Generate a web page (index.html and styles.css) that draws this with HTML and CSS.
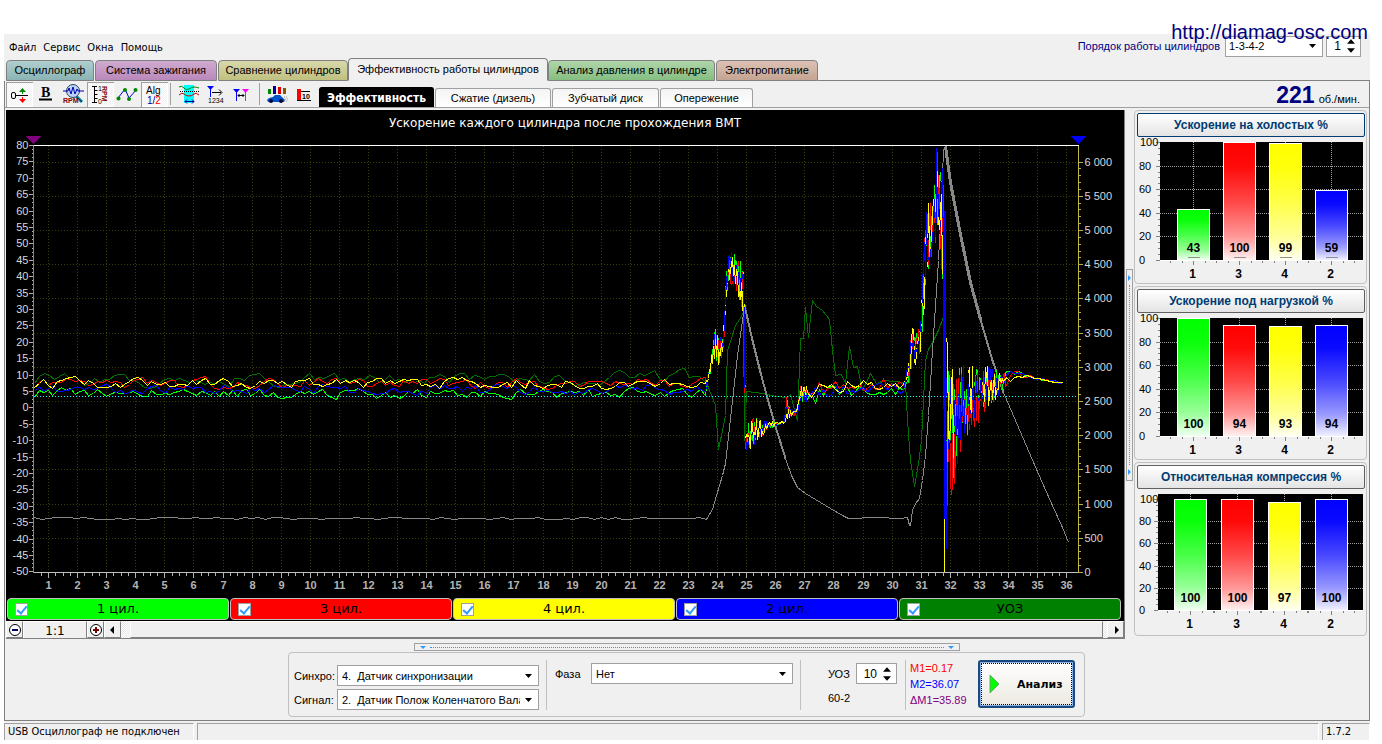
FILE: index.html
```html
<!DOCTYPE html>
<html lang="ru">
<head>
<meta charset="utf-8">
<title>USB Осциллограф</title>
<link rel="stylesheet" href="styles.css">
</head>
<body>
<a class="site-link" href="#">http://diamag-osc.com</a>
<div class="window">
  <header class="menu-row">
    <nav class="menu">
      <button class="menu-item">Файл</button><button class="menu-item">Сервис</button><button class="menu-item">Окна</button><button class="menu-item">Помощь</button>
    </nav>
    <div class="order">
      <label class="order-label" for="order">Порядок работы цилиндров</label>
      <span class="combo combo-order"><select id="order"><option>1-3-4-2</option></select><svg class="arrow" viewBox="0 0 7 4"><path d="M0 0h7L3.500 4z"/></svg></span>
      <span class="spin spin-small"><input type="text" value="1" aria-label="Номер цилиндра"><span class="spin-buttons"><button aria-label="Больше"><svg viewBox="0 0 7 4"><path d="M0 4h7L3.500 0z"/></svg></button><button aria-label="Меньше"><svg viewBox="0 0 7 4"><path d="M0 0h7L3.500 4z"/></svg></button></span></span>
    </div>
  </header>
  <nav class="tabs">
    <button class="tab tab-teal">Осциллограф</button>
    <button class="tab tab-violet">Система зажигания</button>
    <button class="tab tab-olive">Сравнение цилиндров</button>
    <button class="tab tab-active">Эффективность работы цилиндров</button>
    <button class="tab tab-green">Анализ давления в цилиндре</button>
    <button class="tab tab-brown">Электропитание</button>
    <span class="tabs-rest"></span>
  </nav>
  <div class="frame">
    <div class="toolbar">
      <div class="tools">
        <button class="tool pressed" aria-label="Смещение нуля"><svg viewBox="0 0 26 25"><path d="M10 13.500h12" stroke="#000"/><path d="M16.500 9v3" stroke="#080" fill="none"/><path d="M13 10l3.500-4 3.500 4z" fill="#080"/><path d="M16.500 15v3" stroke="#f00"/><path d="M13 17h7l-3.500 4z" fill="#f00"/><rect x="5.500" y="10.500" width="4" height="6" rx="1.500" fill="none" stroke="#000"/></svg></button>
        <button class="tool" aria-label="Жирные линии"><svg viewBox="0 0 26 25"><text class="icon-b" x="8" y="15">B</text><path d="M6 17.500h13" stroke="#000" stroke-width="2"/></svg></button>
        <button class="tool" aria-label="Обороты"><svg viewBox="0 0 26 25"><path d="M16 14l6 6" stroke="#08a" stroke-width="3"/><path d="M16 14l6 6" stroke="#222" stroke-width="1"/><circle cx="13" cy="9" r="6.500" fill="#b8d4ff" stroke="#345" /><path d="M3 9h5l1-3 2 6 2-7 2 7 2-5 1 2h6" fill="none" stroke="#00a"/><text class="icon-rpm" x="3" y="21">RPM</text></svg></button>
        <button class="tool pressed" aria-label="Шкала оборотов"><svg viewBox="0 0 26 25"><path d="M5 4.500h5M5 20.500h5M7.500 4v17M7.500 8.500h3M7.500 12.500h3M7.500 16.500h3" stroke="#000"/><text class="icon-tiny" x="11" y="9">1</text><text class="icon-tiny" x="11" y="22">0</text><g transform="translate(15 4) rotate(90)"><text class="icon-rpm" x="0" y="0">RPM</text></g></svg></button>
        <button class="tool" aria-label="Точки"><svg viewBox="0 0 26 25"><path d="M4 16l7-9 4 9 8-9" fill="none" stroke="#00d"/><g fill="#080"><circle cx="4.500" cy="16.500" r="2"/><circle cx="11" cy="8" r="2"/><circle cx="15" cy="17" r="2"/><circle cx="21.500" cy="8" r="2"/></g></svg></button>
        <button class="tool pressed" aria-label="Алгоритм"><svg viewBox="0 0 26 25"><text class="icon-alg" x="5" y="12">Alg</text><text class="icon-alg" x="6" y="22" fill="#009">1/<tspan fill="#f00">2</tspan></text></svg></button>
        <span class="tool-sep"></span>
        <button class="tool" aria-label="Синхронизация"><svg viewBox="0 0 26 25"><path d="M8 3h10v18H8z" fill="#0ff"/><path d="M3 5q3-2 5 1t5 1 5-2 5 1" fill="none" stroke="#080"/><path d="M3 13q3-3 5-1t5 2 5-2 5 1" fill="none" stroke="#c00"/><path d="M4 9.500h20" stroke="#000" stroke-dasharray="1 1"/><path d="M9 19.500h9M11 17.500l-2 2 2 2M16 17.500l2 2-2 2" fill="none" stroke="#009"/></svg></button>
        <button class="tool" aria-label="Нумерация"><svg viewBox="0 0 26 25"><path d="M4 4h7l-3.500 4z" fill="#00f"/><path d="M7.500 7v8" stroke="#00f"/><path d="M9 10.500h9M16 7.500l3 3-3 3" fill="none" stroke="#000"/><text class="icon-num" x="5" y="21">1234</text></svg></button>
        <button class="tool" aria-label="Маркеры"><svg viewBox="0 0 26 25"><path d="M3 7h7l-3.500 4z" fill="#00f"/><path d="M12 7h7l-3.500 4z" fill="#f0f"/><path d="M6.500 9v10" stroke="#00f"/><path d="M15.500 9v10" stroke="#f0f"/><path d="M8 13.500h6M9.500 12l-1.500 1.500 1.500 1.500M12.500 12l1.500 1.500-1.500 1.500" fill="none" stroke="#000"/></svg></button>
        <span class="tool-sep"></span>
        <button class="tool" aria-label="Тест автомобиля"><svg viewBox="0 0 26 25"><path d="M3 7h3v5H3z" fill="#080"/><path d="M8 4h3v8H8z" fill="#009"/><path d="M13 5h3v7h-3z" fill="#d00"/><path d="M18 6h3v6h-3z" fill="#850"/><path d="M2 18l2-2 4-1 2-2h5l3 3 2 2-1 2H3z" fill="#05c"/><circle cx="6" cy="19" r="2" fill="#003"/><circle cx="16" cy="19" r="2" fill="#003"/><path d="M19 15h3M20 17h3M19 19h3" stroke="#999" stroke-dasharray="1 1"/></svg></button>
        <button class="tool" aria-label="Порог"><svg viewBox="0 0 26 25"><path d="M5 7h4v11H5z" fill="#f00"/><path d="M9 9.500h9M5 18.500h14" stroke="#000"/><text class="icon-ten" x="10" y="17">10</text></svg></button>
      </div>
      <nav class="subtabs">
        <button class="subtab subtab-active">Эффективность</button>
        <button class="subtab subtab-wide">Сжатие (дизель)</button>
        <button class="subtab">Зубчатый диск</button>
        <button class="subtab subtab-narrow">Опережение</button>
      </nav>
      <div class="rpm"><b>221</b><span>об./мин.</span></div>
    </div>
    <main class="main">
      <section class="scope">
        <svg id="chart" class="chart" role="img" aria-label="Ускорение каждого цилиндра"></svg>
        <div class="legend">
          <label class="legend-item c-green"><input type="checkbox" checked><span>1 цил.</span></label>
          <label class="legend-item c-red"><input type="checkbox" checked><span>3 цил.</span></label>
          <label class="legend-item c-yellow"><input type="checkbox" checked><span>4 цил.</span></label>
          <label class="legend-item c-blue"><input type="checkbox" checked><span>2 цил.</span></label>
          <label class="legend-item c-dark"><input type="checkbox" checked><span>УОЗ</span></label>
        </div>
        <div class="scrollbar">
          <button class="scroll-btn" aria-label="Уменьшить"><svg viewBox="0 0 14 14"><circle cx="7" cy="7" r="5.500" fill="#fff" stroke="#000"/><path d="M4 7h6" stroke="#006" stroke-width="2"/></svg></button>
          <span class="zoom">1:1</span>
          <button class="scroll-btn" aria-label="Увеличить"><svg viewBox="0 0 14 14"><circle cx="7" cy="7" r="5.500" fill="#fff" stroke="#000"/><path d="M4 7h6M7 4v6" stroke="#700" stroke-width="2"/></svg></button>
          <button class="scroll-btn" aria-label="Влево"><svg viewBox="0 0 14 14"><path d="M8 3v8L4 7z"/></svg></button>
          <span class="track"><span class="thumb"></span></span>
          <button class="scroll-btn" aria-label="Вправо"><svg viewBox="0 0 14 14"><path d="M6 3v8l4-4z"/></svg></button>
        </div>
      </section>
      <div class="vsplit"><i></i><b></b><i></i></div>
      <aside class="side">
        <section class="card"><button class="card-title focused">Ускорение на холостых %</button><svg class="bars" id="bars-idle"></svg></section>
        <section class="card"><button class="card-title">Ускорение под нагрузкой %</button><svg class="bars" id="bars-load"></svg></section>
        <section class="card"><button class="card-title">Относительная компрессия %</button><svg class="bars" id="bars-comp"></svg></section>
      </aside>
    </main>
    <div class="hsplit"><i></i><b></b><i></i></div>
    <form class="controls" onsubmit="return false">
      <div class="sources">
        <label for="sync">Синхро:</label>
        <span class="combo"><select id="sync"><option>4.&nbsp; Датчик синхронизации</option></select><svg class="arrow" viewBox="0 0 7 4"><path d="M0 0h7L3.500 4z"/></svg></span>
        <label for="signal">Сигнал:</label>
        <span class="combo"><select id="signal"><option>2.&nbsp; Датчик Полож Коленчатого Вала</option></select><svg class="arrow" viewBox="0 0 7 4"><path d="M0 0h7L3.500 4z"/></svg></span>
      </div>
      <div class="phase">
        <label for="phase">Фаза</label>
        <span class="combo"><select id="phase"><option>Нет</option></select><svg class="arrow" viewBox="0 0 7 4"><path d="M0 0h7L3.500 4z"/></svg></span>
      </div>
      <div class="advance">
        <label for="uoz">УОЗ</label>
        <span class="spin"><input id="uoz" type="text" value="10"><span class="spin-buttons"><button aria-label="Больше"><svg viewBox="0 0 7 4"><path d="M0 4h7L3.500 0z"/></svg></button><button aria-label="Меньше"><svg viewBox="0 0 7 4"><path d="M0 0h7L3.500 4z"/></svg></button></span></span>
        <span>60-2</span>
      </div>
      <div class="markers"><span class="m-red">M1=0.17</span><span class="m-blue">M2=36.07</span><span class="m-violet">ΔM1=35.89</span></div>
      <button class="analyze"><svg viewBox="0 0 12 20"><path d="M1 1v18l9-9z" fill="#0f0" stroke="#6a6" /></svg><span>Анализ</span></button>
    </form>
  </div>
  <footer class="status"><span>USB Осциллограф не подключен</span><span></span><span>1.7.2</span></footer>
</div>
<script src="chart.js"></script>
</body>
</html>
```
FILE: styles.css
```css
* { box-sizing: border-box; }
body { margin: 0; background: #fff; color: #000; font: 11px/14px "Liberation Sans", Arial, sans-serif; position: relative; }
button, select, input { font: inherit; color: inherit; margin: 0; padding: 0; border: 0; background: none; border-radius: 0; }
svg { display: block; }

.site-link { position: absolute; right: 14px; top: 20px; z-index: 2; font-size: 20px; line-height: 24px; color: #000080; text-decoration: none; }
.window { margin: 34px 12px 0 4px; background: #f0f0f0; }

.menu-row { display: flex; justify-content: space-between; align-items: center; height: 24px; padding: 0 9px 0 5px; }
.menu { display: flex; gap: 7px; padding-top: 3px; font-family: "DejaVu Sans Condensed", "DejaVu Sans", sans-serif; }
.order { display: flex; align-items: center; gap: 3px; }
.order-label { color: #000080; margin-right: 2px; }

.combo { display: grid; align-items: center; height: 21px; background: #fff; border: 1px solid #a0a0a0; }
.combo select { grid-area: 1 / 1; appearance: none; width: 100%; min-width: 0; padding: 0 18px 0 4px; }
.arrow { grid-area: 1 / 1; justify-self: end; width: 7px; height: 4px; margin-right: 6px; pointer-events: none; }
.combo-order { width: 98px; }
.combo-order select { padding-left: 3px; }
.spin { display: flex; align-items: center; height: 21px; width: 41px; background: #fff; border: 1px solid #a0a0a0; font-size: 12px; }
.spin input { flex: 1; min-width: 0; text-align: right; padding-right: 6px; }
.spin-small { width: 35px; }
.spin-buttons { display: flex; flex-direction: column; gap: 4px; margin-right: 5px; }
.spin-buttons button { width: 8px; height: 5px; }
.spin-buttons svg { width: 8px; height: 5px; }

.tabs { display: flex; align-items: flex-end; height: 23px; padding-left: 1px; }
.tab { height: 21px; padding-bottom: 2px; margin-left: 1px; border: 1px solid #808080; border-radius: 4px 4px 0 0; white-space: nowrap; }
.tab-teal { width: 88px; background: linear-gradient(#b0cfcf, #8bb3b3); }
.tab-violet { width: 122px; background: linear-gradient(#cfabd0, #b988ba); }
.tab-olive { width: 130px; background: linear-gradient(#d8d8ac, #c0c080); }
.tab-active { width: 200px; height: 23px; margin-left: 0; background: #f0f0f0; border-bottom-color: #f0f0f0; }
.tab-green { width: 167px; margin-left: 0; background: linear-gradient(#b0d6ab, #85bd80); }
.tab-brown { width: 102px; background: linear-gradient(#dcc2b4, #c4a492); }
.tabs-rest { flex: 1; border-bottom: 1px solid #808080; }

.frame { border: 1px solid #808080; border-top: 0; }
.toolbar { display: flex; align-items: flex-end; height: 27px; padding-left: 1px; border-bottom: 1px solid #a0a0a0; }
.tools { display: flex; align-items: center; height: 26px; }
.tool { width: 27px; height: 25px; }
.tool svg { width: 26px; height: 25px; }
.pressed { background: repeating-conic-gradient(#fff 0 25%, #f0f0f0 0 50%) 0 0 / 2px 2px; box-shadow: inset 1px 1px #a0a0a0, inset -1px -1px #fff; }
.tool-sep { width: 1px; height: 22px; margin: 0 5px 0 2px; background: #a0a0a0; }
.icon-b { font: bold 14px "Liberation Serif", serif; }
.icon-rpm { font: bold 7px "Liberation Sans", sans-serif; fill: #800000; }
.icon-tiny { font: 7px "Liberation Sans", sans-serif; }
.icon-alg { font: 10px "Liberation Sans", sans-serif; }
.icon-num { font: 7px "Liberation Sans", sans-serif; }
.icon-ten { font: bold 7px "Liberation Sans", sans-serif; }
.subtabs { display: flex; align-items: flex-end; gap: 1px; }
.subtab { width: 107px; height: 19px; border: 1px solid #a0a0a0; border-bottom: 0; border-radius: 3px 3px 0 0; background: linear-gradient(#f4f4f4, #fff); }
.subtab-wide { width: 116px; }
.subtab-narrow { width: 93px; }
.subtab-active { width: 115px; height: 20px; background: #000; color: #fff; font: bold 12px "DejaVu Sans Condensed", "DejaVu Sans", sans-serif; border-color: #000; }
.rpm { display: flex; align-items: baseline; gap: 4px; margin-left: auto; margin-right: 9px; }
.rpm b { font-size: 23px; line-height: 24px; color: #000080; }

.main { display: flex; padding: 2px 2px 0 1px; }
.scope { flex: 1; min-width: 0; background: #000; border-right: 1px solid #808080; border-bottom: 1px solid #808080; }
.chart { width: 100%; height: 488px; }
.chart text { font: 11px "Liberation Sans", sans-serif; fill: #d8d8d8; }
.chart .chart-title { font: 12px "DejaVu Sans", sans-serif; fill: #fff; }
.chart .x-label { font-weight: bold; fill: #b4b4b4; }
.trace { fill: none; shape-rendering: crispEdges; }
.legend { display: flex; gap: 1px; padding: 0 3px 1px 1px; }
.legend-item { flex: 1; display: grid; grid-template-columns: 13px 1fr 13px; align-items: center; height: 22px; padding: 0 7px; border: 1px solid #c0c0c0; border-radius: 4px; text-align: center; font: 13px/18px "DejaVu Sans", sans-serif; }
.legend-item input { appearance: none; display: grid; place-items: center; width: 13px; height: 13px; background: #fff; border: 1px solid #a0a0a0; }
.legend-item input:checked::after { content: ""; width: 4px; height: 8px; border: solid #3399ff; border-width: 0 2px 2px 0; rotate: 40deg; margin-bottom: 2px; }
.c-green { background: #0f0; }
.c-red { background: #f00; }
.c-yellow { background: #ff0; }
.c-blue { background: #00f; }
.c-dark { background: #008000; }
.scrollbar { display: flex; height: 17px; background: #f0f0f0; }
.scroll-btn { display: grid; place-items: center; width: 17px; border: 1px solid #808080; border-color: #fff #808080 #808080 #fff; }
.scroll-btn svg { width: 14px; height: 14px; }
.zoom { width: 64px; font: 12px/18px "DejaVu Sans", sans-serif; text-align: center; border-right: 1px solid #808080; border-left: 1px solid #fff; border-top: 1px solid #fff; }
.track { flex: 1; padding: 0 4px 0 9px; background: repeating-conic-gradient(#fff 0 25%, #e8e8e8 0 50%) 0 0 / 2px 2px; }
.thumb { display: block; height: 100%; background: #f0f0f0; border: 1px solid #808080; border-color: #fff #808080 #808080 #fff; }

.vsplit { align-self: center; display: flex; flex-direction: column; align-items: center; justify-content: space-between; width: 7px; height: 212px; margin: 0 1px; padding: 5px 0; border: 1px solid #a0a0a0; }
.vsplit b { flex: 1; margin: 4px 0; border-left: 1px dotted #3399ff; }
.vsplit i { border: 3px solid transparent; border-left-color: #3399ff; border-right: 0; }
.side { width: 233px; display: flex; flex-direction: column; gap: 2px; }
.card { border: 1px solid #c0c0c0; border-radius: 4px; padding: 2px 1px 0 2px; }
.card-title { display: block; width: 100%; height: 24px; border: 1px solid #606060; border-radius: 2px; background: linear-gradient(#fff, #e4e4e4); color: #003c74; font-weight: bold; font-size: 12px; }
.focused { border-color: #003c74; }
.bars { width: 100%; height: 146px; }
.bars text { font: 11px "Liberation Sans", sans-serif; }
.bars .bar-value, .bars .bar-name { font-weight: bold; font-size: 12px; text-anchor: middle; }

.hsplit { display: flex; align-items: center; width: 546px; height: 8px; margin: 4px 0 1px 409px; padding: 0 5px; border: 1px solid #a0a0a0; }
.hsplit b { flex: 1; margin: 0 4px; border-top: 1px dotted #3399ff; }
.hsplit i { border: 3px solid transparent; border-top-color: #3399ff; border-bottom: 0; }

.controls { display: flex; align-items: flex-start; width: 797px; height: 65px; margin: 0 0 3px 283px; padding: 7px 9px 0 5px; border: 1px solid #c0c0c0; border-radius: 4px; }
.controls > div { height: 50px; }
.sources { display: grid; grid-template-columns: 40px 202px; column-gap: 3px; row-gap: 3px; align-items: center; align-content: end; }
.phase { display: grid; grid-template-columns: 36px 202px; align-items: start; margin-left: 7px; padding: 3px 7px 0 8px; border-left: 1px solid #c0c0c0; }
.phase label, .advance label { padding-top: 4px; }
.advance { display: grid; grid-template-columns: 28px 41px; align-content: start; row-gap: 7px; padding: 3px 8px 0 27px; border-left: 1px solid #c0c0c0; }
.markers { display: flex; flex-direction: column; font-size: 11px; line-height: 16px; padding-left: 4px; border-left: 1px solid #c0c0c0; }
.m-red { color: #f00; }
.m-blue { color: #00f; }
.m-violet { color: #800080; }
.analyze { display: flex; align-items: center; width: 97px; height: 48px; margin-left: auto; padding-left: 9px; gap: 16px; border: 2px solid #1c4a80; border-radius: 3px; background: linear-gradient(#fff, #ece9e0); box-shadow: inset 0 0 0 1px #8cb4e8; outline: 1px dotted #000; outline-offset: -4px; font: bold 11px "DejaVu Sans", sans-serif; }
.analyze svg { width: 12px; height: 20px; }

.status { display: grid; grid-template-columns: 190px 1fr 48px; gap: 3px; padding-top: 2px; font: 11px/16px "DejaVu Sans Condensed", "DejaVu Sans", sans-serif; }
.status span { height: 17px; padding-left: 3px; border: 1px solid #a0a0a0; border-bottom: 0; border-right-color: #fff; }
```
FILE: chart.js
```js
const NS = "http://www.w3.org/2000/svg";
function add(parent, name, attrs, text) {
  const el = document.createElementNS(NS, name);
  for (const k in attrs) el.setAttribute(k, attrs[k]);
  if (text !== undefined) el.textContent = text;
  parent.appendChild(el);
  return el;
}

function random(seed) {
  let a = Math.imul(seed, 2654435761);
  return () => {
    a = (a + 0x6d2b79f5) | 0;
    let t = Math.imul(a ^ (a >>> 15), 1 | a);
    t = (t + Math.imul(t ^ (t >>> 7), 61 | t)) ^ t;
    return ((t ^ (t >>> 14)) >>> 0) / 4294967296;
  };
}

// Linear interpolation over [x, mean, spread] keyframes.
function at(keys, x) {
  let i = 1;
  while (i < keys.length - 1 && keys[i][0] < x) i++;
  const a = keys[i - 1], b = keys[i], t = (x - a[0]) / (b[0] - a[0]);
  return [a[1] + (b[1] - a[1]) * t, a[2] + (b[2] - a[2]) * t];
}

// Traces live on a 1118 x 488 canvas.
const envelope = [
  [699, 276, 4], [704, 258, 6], [709, 234, 20], [713, 244, 16], [716, 236, 12], [718, 212, 14],
  [720, 175, 14], [722, 156, 17], [729, 160, 17], [734, 172, 22], [737, 184, 26], [738, 215, 14],
  [739, 332, 8], [744, 322, 17], [752, 319, 11], [760, 315, 5], [772, 313, 1], [778, 311, 2],
  [780, 298, 12], [784, 302, 4], [791, 301, 4], [794, 283, 7], [806, 282, 8], [824, 279, 7],
  [874, 276, 6], [899, 277, 5], [903, 256, 20], [906, 232, 24], [910, 240, 18], [914, 224, 18],
  [917, 180, 32], [920, 130, 38], [924, 118, 36], [928, 105, 34], [931, 80, 40], [933, 95, 44], [937, 120, 64]
];
const tail = [
  [940, 310, 70], [945, 310, 66], [953, 292, 46], [963, 286, 30], [975, 277, 26], [986, 276, 18],
  [998, 270, 9], [1006, 264, 5], [1014, 264, 3], [1030, 268, 1], [1042, 270, 1], [1058, 273, 1]
];

function cylinder(level, seed, shift, drop) {
  const r = random(seed), pts = [];
  let v = 0;
  for (let x = 28; x < 700; x += 4.500) {
    v = v * 0.400 + (r() - 0.500) * 9;
    pts.push([x, level + v]);
  }
  for (let x = 700; x < 938; x += x > 800 && x < 900 ? 4 : 1) {
    const [m, s] = at(envelope, x);
    const o = x > 790 && x < 900 ? (level - 277) * 0.600 : 0;
    pts.push([x, m + o + (r() - 0.500) * 2 * s]);
  }
  pts.push([938, drop], [939, 270]);
  for (let x = 940; x < 1059; x += x < 1000 ? 1 : 4) {
    const [m, s] = at(tail, x);
    const fade = Math.max(0, (990 - x) / 50);
    pts.push([x, m + shift * fade + (r() - 0.500) * 2 * s]);
  }
  return pts;
}

function advance() {
  const r = random(41), pts = [];
  let v = 0;
  for (let x = 28; x < 700; x += 5) {
    v = v * 0.600 + (r() - 0.500) * 11;
    pts.push([x, 268 + v]);
  }
  return pts.concat([[700, 272], [705, 285], [709, 295], [712, 339], [716, 320], [719, 305], [721, 240],
    [725, 228], [729, 215], [735, 206], [737, 201], [738, 330], [740, 281], [756, 283], [770, 286],
    [781, 287], [784, 284], [791, 310], [794, 228], [797, 228], [799, 197], [802, 227], [806, 190],
    [810, 196], [816, 200], [823, 209], [826, 240], [829, 265], [835, 264], [839, 273], [843, 236],
    [847, 257], [851, 256], [856, 280], [864, 263], [870, 273], [878, 270], [887, 271], [899, 272],
    [901, 310], [904, 350], [908, 376], [912, 353], [915, 330], [917, 290], [919, 250], [922, 239],
    [927, 230], [932, 220], [937, 206]]);
}

function speedTrace() {
  const r = random(5), pts = [];
  for (let x = 28; x < 702; x += 7) pts.push([x, 408 + (r() - 0.500) * 2]);
  pts.push([706, 399], [710, 385], [716, 365], [719, 353], [722, 326], [726, 290], [731, 245], [736, 210], [738, 195],
    [741, 208], [746, 230], [754, 262], [761, 288], [769, 316], [779, 348], [785, 365], [791, 377], [799, 383],
    [809, 389], [824, 398], [836, 405], [842, 408], [870, 407], [895, 408], [901, 407], [903, 415], [904, 415],
    [906, 400], [909, 393], [913, 388], [916, 370], [919, 345], [922, 305], [926, 240], [929, 195], [932, 150],
    [935, 90], [937, 40], [939, 36], [944, 72], [954, 124], [964, 172], [974, 209], [986, 250], [997, 282],
    [1009, 310], [1024, 345], [1041, 384], [1056, 417], [1062, 432]);
  return pts;
}

function drawChart() {
  const svg = document.getElementById("chart");
  svg.textContent = "";
  const W = svg.clientWidth, k = W / 1118;
  const X = x => Math.round(x * k) + 0.500, Y = y => Math.round(y) + 0.500;
  const left = X(27), right = X(1072), top = 35.500, bottom = 462.500;
  const trace = (pts, color, width) => add(svg, "polyline", {
    class: "trace", stroke: color, "stroke-width": width || 1, "stroke-linejoin": "bevel",
    points: pts.map(p => X(p[0]) + "," + Y(p[1])).join(" ")
  });
  const between = (pts, from, to) => pts.filter(p => p[0] >= from && p[0] <= to);
  const line = (x1, y1, x2, y2, color, dash) => add(svg, "line", {
    x1, y1, x2, y2, stroke: color, "stroke-dasharray": dash || "none", "shape-rendering": "crispEdges"
  });

  add(svg, "text", { class: "chart-title", x: W / 2, y: 17, "text-anchor": "middle" }, "Ускорение каждого цилиндра после прохождения ВМТ");

  for (let i = 0; i <= 12; i++) {
    const y = Y(462 - i * 34.200);
    if (i) line(left, y, right, y, "#3c3c00", "1 2");
    add(svg, "text", { x: right + 6, y: y + 3.500 }, i < 2 ? String(i * 500) : String(i * 500).replace(/(\d)(\d{3})$/, "$1 $2"));
    line(right, y, right + 4, y, "#b8b040");
    for (let m = 1; m < 5 && i < 12; m++) line(right, Y(462 - i * 34.200 - m * 6.840), right + 2, Y(462 - i * 34.200 - m * 6.840), "#b8b040");
  }
  for (let i = 1; i <= 36; i++) {
    const x = X(42 + (i - 1) * 29.090);
    line(x, top, x, bottom, "#3c3c00", "1 2");
    line(x, bottom, x, bottom + 5, "#b0b0b0");
    for (let m = 1; m < 4; m++) {
      const tx = X(42 + (i - 1) * 29.090 - m * 7.270);
      if (tx > left) line(tx, bottom, tx, bottom + 3, "#b0b0b0");
    }
    add(svg, "text", { class: "x-label", x, y: 479, "text-anchor": "middle" }, i);
  }
  for (let v = 80; v >= -50; v -= 5) {
    const y = Y(35 + (80 - v) * 3.280);
    line(left - 5, y, left, y, "#b0b0b0");
    for (let m = 1; m < 4 && v > -50; m++) {
      const ty = Y(35 + (80 - v + m * 1.250) * 3.280);
      line(left - 2, ty, left, ty, "#b0b0b0");
    }
    add(svg, "text", { x: left - 5, y: y + 3.500, "text-anchor": "end" }, v);
  }

  trace(advance(), "#007000");
  const speed = speedTrace();
  trace(speed, "#888");
  trace(between(speed, 738, 780), "#888", 2);
  trace(between(speed, 939, 1000), "#888", 2);
  trace(between(speed, 939, 975), "#888", 3);
  const yellow = cylinder(273, 53, -14, 462);
  trace(cylinder(283, 7, 10, 330), "#0f0");
  trace(cylinder(273, 19, 22, 360), "#f00");
  trace(between(yellow, 0, 937), "#ff0");
  trace(cylinder(279, 31, 8, 438), "#00f");
  trace(between(yellow, 0, 712), "#ff0");
  trace(between(yellow, 724, 736), "#ff0");
  trace(between(yellow, 739, 900), "#ff0");
  trace(between(yellow, 932, 936), "#ff0");
  trace(between(yellow, 940, 947), "#ff0");
  trace(between(yellow, 962, 966), "#ff0");
  trace(between(yellow, 976, 1060), "#ff0");
  trace([[938, 100], [938, 408]], "#00f", 2);
  trace([[940, 330], [940, 438]], "#00f");
  trace([[930, 37], [930, 100]], "#00f");
  trace([[938, 408], [938, 462]], "#ff0");

  line(left, 286.500, right, 286.500, "#0ff", "1 2");
  line(left, top, right, top, "#fff");
  line(left, bottom, right, bottom, "#c0c0c0");
  line(left, top, left, bottom, "#4caf50");
  line(right, top, right, bottom, "#c0b840");
  add(svg, "path", { d: `M${left - 8} 26h16l-8 8z`, fill: "#800080" });
  add(svg, "path", { d: `M${right - 8} 26h16l-8 8z`, fill: "#00f" });
}

const names = ["1", "3", "4", "2"];
const colors = ["#0f0", "#f00", "#ff0", "#00f"];

function drawBars(id, values, plot, marks) {
  const svg = document.getElementById(id);
  svg.textContent = "";
  const W = svg.clientWidth, right = W - 2;
  const unit = (plot.bottom - plot.full) / 100;
  const line = (x1, y1, x2, y2, color, dash) => add(svg, "line", {
    x1, y1, x2, y2, stroke: color, "stroke-dasharray": dash || "none", "shape-rendering": "crispEdges"
  });
  const fade = add(add(svg, "defs", {}), "linearGradient", { id: id + "-fade", x1: 0, x2: 0, y1: 0, y2: 1 });
  [[0, 0], [0.200, 0.040], [0.500, 0.280], [0.800, 0.600], [1, 0.950]].forEach(([offset, alpha]) =>
    add(fade, "stop", { offset, "stop-color": "#fff", "stop-opacity": alpha }));
  add(svg, "rect", { x: plot.left, y: plot.top, width: right - plot.left, height: plot.bottom - plot.top + 1 });
  for (let v = 0; v <= 100; v += 20) {
    const y = Math.round(plot.bottom - v * unit) + 0.500;
    line(plot.left - 4, y, plot.left, y, "#808080");
    for (let m = 1; m < 4 && v < 100; m++) {
      const ty = Math.round(plot.bottom - (v + m * 5) * unit) + 0.500;
      line(plot.left - 2, ty, plot.left, ty, "#808080");
    }
    if (v < 100) line(plot.left, y, right, y, v ? "#a0a0a0" : "#fff", v ? "1 1" : "");
    add(svg, "text", { x: v === 100 ? 3 : 2, y: y + 3.500 }, v);
  }
  values.forEach((v, i) => {
    const cx = plot.first + i * plot.step + 0.500;
    const y = Math.round(plot.bottom - v * unit) + 0.500;
    const box = { x: cx - 16, y, width: 32, height: plot.bottom - y + 0.500 };
    line(cx, plot.top, cx, plot.bottom, "#a0a0a0", "1 1");
    add(svg, "rect", { ...box, fill: colors[i] });
    add(svg, "rect", { ...box, fill: `url(#${id}-fade)`, stroke: "#fff" });
    add(svg, "text", { class: "bar-value", x: cx, y: plot.bottom - 8 }, v);
    if (marks) line(cx - 6, plot.bottom - 2.500, cx + 6, plot.bottom - 2.500, "#909090");
    for (let m = -2; m < 3; m++) line(cx + m * 11.500, plot.bottom + 1, cx + m * 11.500, plot.bottom + (m ? 3 : 5), "#808080");
    add(svg, "text", { class: "bar-name", x: cx - 1, y: plot.bottom + 18 }, names[i]);
  });
}

function draw() {
  drawChart();
  drawBars("bars-idle", [43, 100, 99, 59], { left: 23, top: 5, full: 5, bottom: 123, first: 56, step: 46 }, true);
  drawBars("bars-load", [100, 94, 93, 94], { left: 23, top: 5, full: 5, bottom: 123, first: 56, step: 46 }, false);
  drawBars("bars-comp", [100, 100, 97, 100], { left: 21, top: 5, full: 10, bottom: 121, first: 53, step: 47 }, false);
}
draw();
window.addEventListener("resize", draw);
```
